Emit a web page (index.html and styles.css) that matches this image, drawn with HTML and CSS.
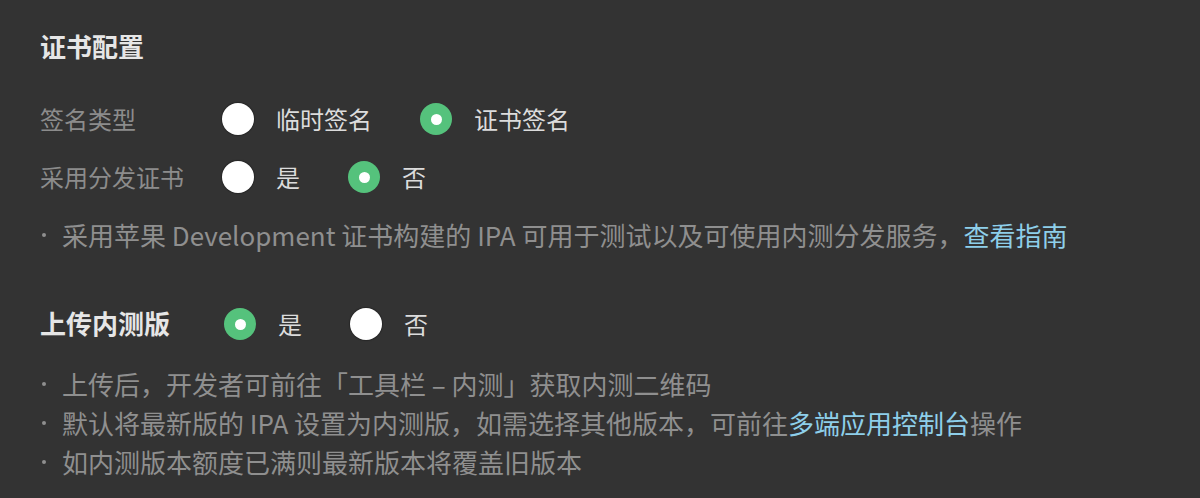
FILE: index.html
```html
<!DOCTYPE html>
<html lang="zh-CN">
<head>
<meta charset="utf-8">
<title>证书配置</title>
<link rel="stylesheet" href="styles.css">
</head>
<body>
<div class="page">
  <section class="section">
    <h2 class="title">证书配置</h2>
    <div class="row">
      <div class="label">签名类型</div>
      <div class="options">
        <label class="option"><span class="radio"></span><span class="opt-text">临时签名</span></label>
        <label class="option"><span class="radio checked"></span><span class="opt-text">证书签名</span></label>
      </div>
    </div>
    <div class="row">
      <div class="label">采用分发证书</div>
      <div class="options">
        <label class="option"><span class="radio"></span><span class="opt-text">是</span></label>
        <label class="option"><span class="radio checked"></span><span class="opt-text">否</span></label>
      </div>
    </div>
    <ul class="notes first-notes">
      <li class="note"><span class="dot"></span>采用苹果 Development 证书构建的 IPA 可用于测试以及可使用内测分发服务，<a class="link">查看指南</a></li>
    </ul>
  </section>
  <section class="section second">
    <div class="row">
      <h2 class="title inline">上传内测版</h2>
      <div class="options">
        <label class="option"><span class="radio checked"></span><span class="opt-text">是</span></label>
        <label class="option"><span class="radio"></span><span class="opt-text">否</span></label>
      </div>
    </div>
    <ul class="notes">
      <li class="note"><span class="dot"></span>上传后，开发者可前往「工具栏 – 内测」获取内测二维码</li>
      <li class="note"><span class="dot"></span>默认将最新版的 IPA 设置为内测版，如需选择其他版本，可前往<a class="link">多端应用控制台</a>操作</li>
      <li class="note"><span class="dot"></span>如内测版本额度已满则最新版本将覆盖旧版本</li>
    </ul>
  </section>
</div>
</body>
</html>
```

FILE: styles.css
```css
html, body {
  margin: 0;
  padding: 0;
  background: #333333;
}
body {
  font-family: "PingFang SC", "Noto Sans CJK SC", "Noto Sans", sans-serif;
  color: #dcdcdc;
}
.page {
  padding: 28px 40px 0 40px;
}
.title {
  margin: 0;
  font-size: 26px;
  line-height: 36px;
  font-weight: 700;
  color: #e6e6e6;
}
.title.inline {
  width: 184px;
  flex: none;
}
.section .title + .row {
  margin-top: 25px;
}
.row {
  display: flex;
  align-items: center;
  height: 58px;
}
.label {
  width: 182px;
  flex: none;
  font-size: 24px;
  color: #8c8c8c;
}
.options {
  display: flex;
  align-items: center;
}
.option {
  display: flex;
  align-items: center;
  margin-right: 48px;
}
.radio {
  width: 32px;
  height: 32px;
  margin-top: 2px;
  border-radius: 50%;
  background: #ffffff;
  box-shadow: 0 0 1px 1px rgba(0, 0, 0, 0.25);
  box-sizing: border-box;
  display: flex;
  align-items: center;
  justify-content: center;
  flex: none;
}
.radio.checked {
  background: #55c27c;
  box-shadow: none;
}
.radio.checked::after {
  content: "";
  width: 11px;
  height: 11px;
  border-radius: 50%;
  background: #ffffff;
}
.opt-text {
  margin-left: 22px;
  font-size: 24px;
  color: #dcdcdc;
}
.notes {
  list-style: none;
  margin: 10px 0 0 0;
  padding: 0;
}
.note {
  font-size: 26px;
  line-height: 39px;
  color: #8f8f8f;
  display: flex;
  align-items: center;
  white-space: nowrap;
}
.dot {
  display: inline-block;
  width: 4px;
  height: 4px;
  border-radius: 50%;
  background: #8f8f8f;
  margin: 0 16px 0 2px;
  flex: none;
}
.link {
  color: #8ecfea;
  text-decoration: none;
}
.second {
  margin-top: 40px;
}
.second .notes {
  margin-top: 12px;
}
```
